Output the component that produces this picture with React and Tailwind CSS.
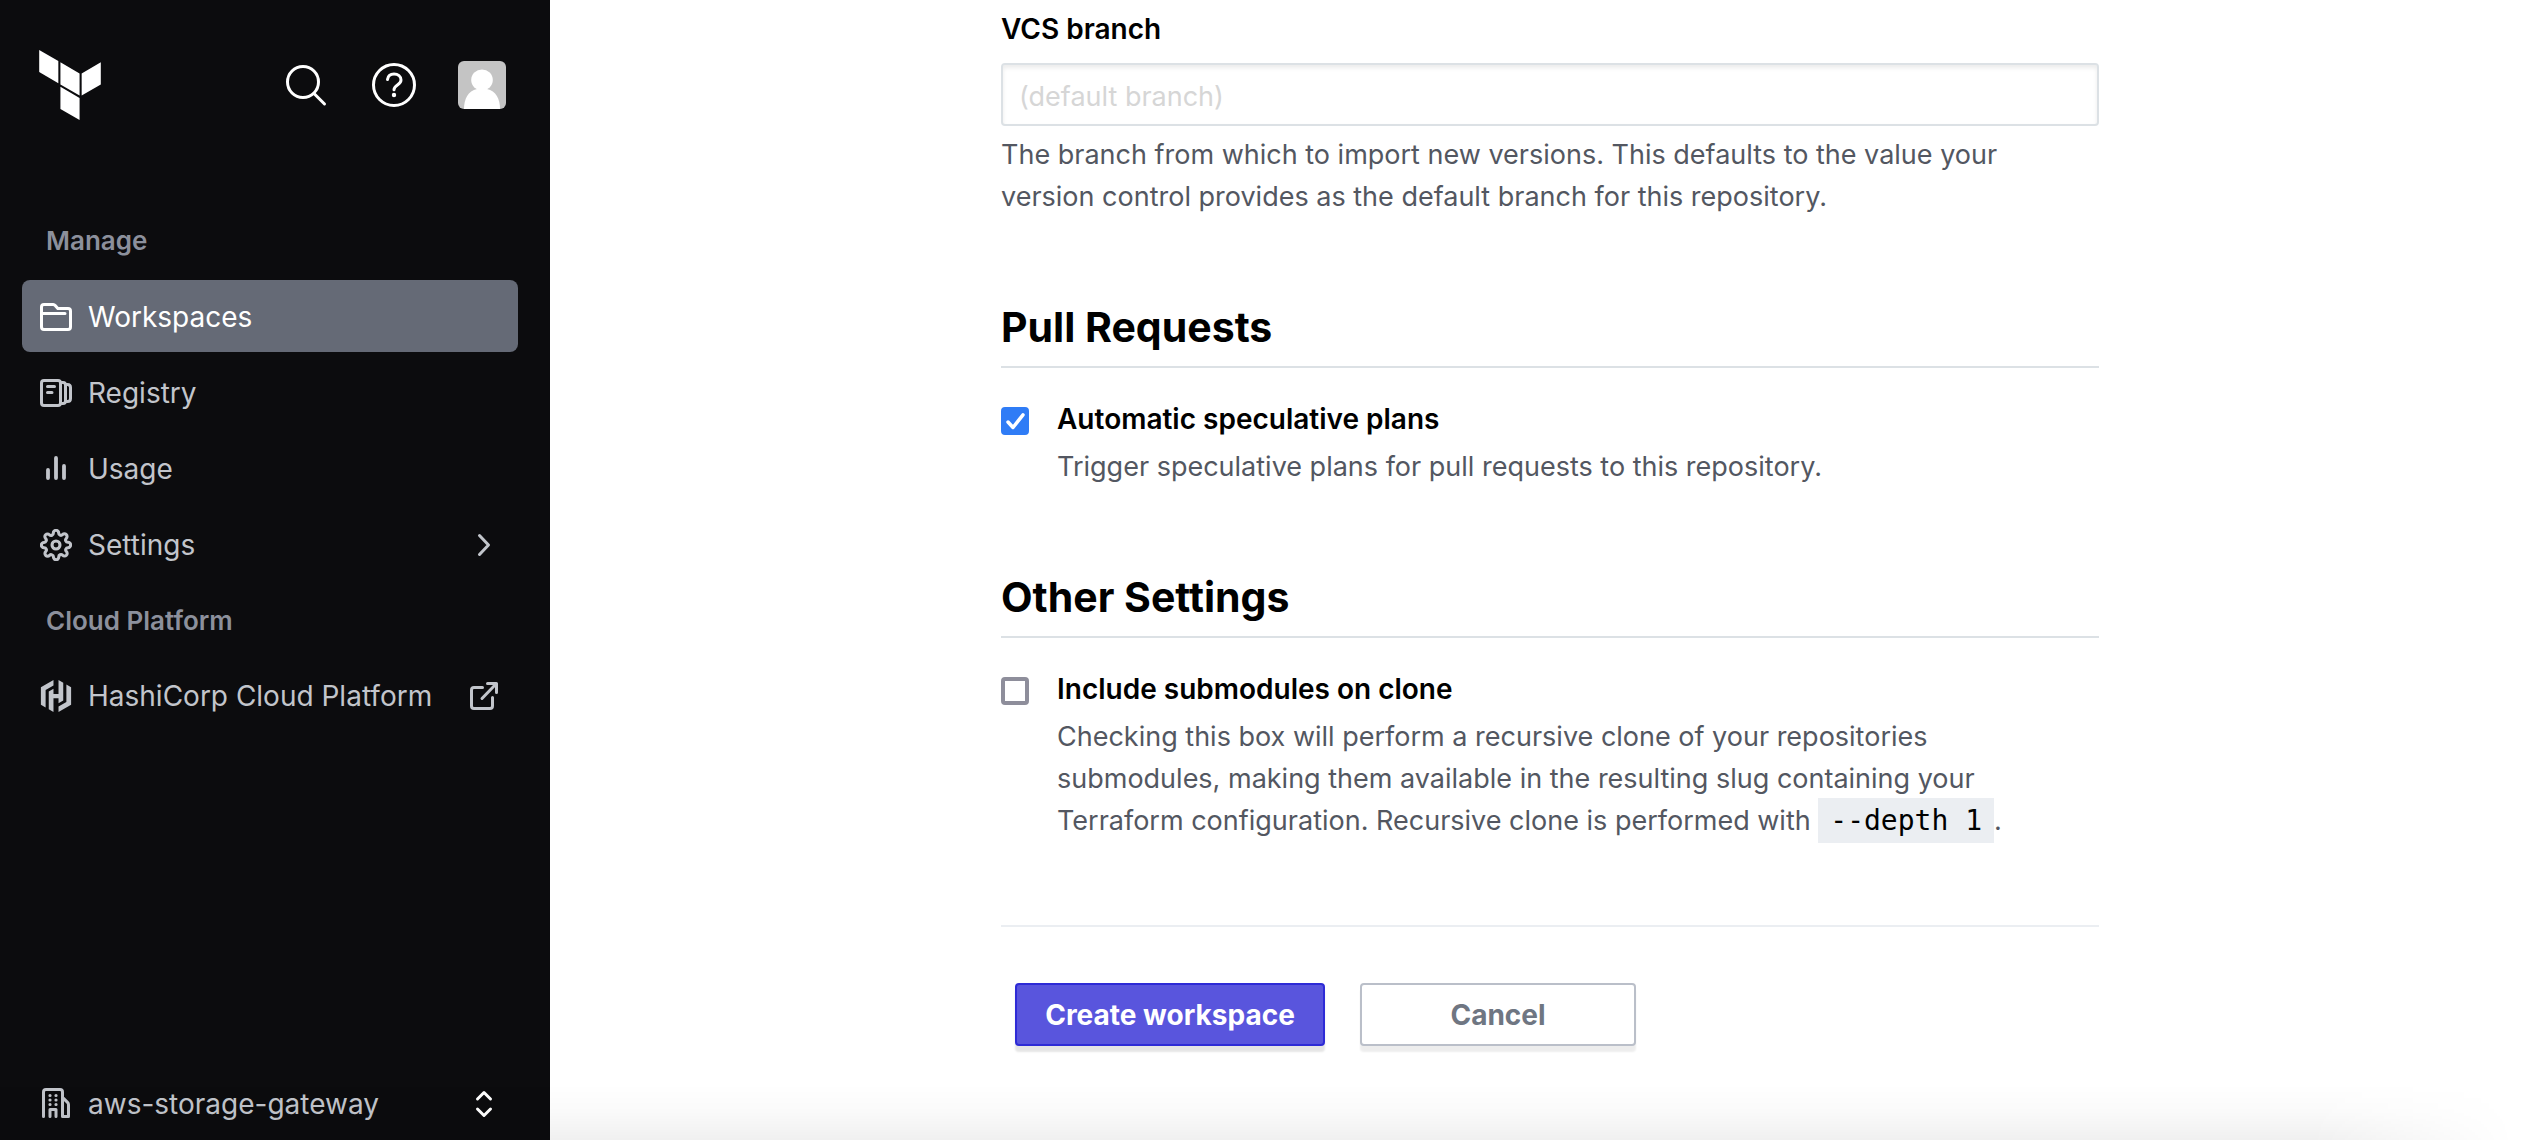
import { useState } from 'react';
import { FiSettings } from 'react-icons/fi';
import { SiHashicorp, SiTerraform } from 'react-icons/si';

const Icon = ({ children, className = '' }) => (
    <svg viewBox="0 0 16 16" fill="none" stroke="currentColor" strokeWidth="1.5" strokeLinecap="round" strokeLinejoin="round" className={`size-8 shrink-0 ${className}`} aria-hidden="true">
        {children}
    </svg>
);

const FolderIcon = () => (
    <Icon>
        <path d="M.75 13V3c0-.7.55-1.25 1.25-1.25h4.6c.4 0 .75.2 1 .5L8.9 3.75H14c.7 0 1.25.55 1.25 1.25v8c0 .7-.55 1.25-1.25 1.25H2C1.3 14.25.75 13.7.75 13zM1 6.25h11.5" />
    </Icon>
);

const RegistryIcon = () => (
    <Icon>
        <rect x=".75" y="1.75" width="9.5" height="12.5" rx="1.25" />
        <path d="M3.75 4.75h3.5M3.75 7.75h2.25M10.75 2.75h.75c.8 0 1.25.5 1.25 1.25v8c0 .75-.45 1.25-1.25 1.25h-.75M13 3.75h.75c.9 0 1.5.5 1.5 1.5v5.5c0 1-.6 1.5-1.5 1.5H13" />
    </Icon>
);

const UsageIcon = () => (
    <Icon>
        <path strokeWidth="1.9" d="M4 8.5v4M8 2.5v10M12 6.5v6" />
    </Icon>
);

const ExternalIcon = () => (
    <Icon>
        <path d="M7.25 3.75H3c-.7 0-1.25.55-1.25 1.25v8c0 .7.55 1.25 1.25 1.25h8c.7 0 1.25-.55 1.25-1.25V8.75M9.75 1.75h4.5v4.5M14 2L7 9.25" />
    </Icon>
);

const OrgIcon = () => (
    <Icon>
        <path d="M1.75 14.25V2c0-.7.55-1.25 1.25-1.25h7c.7 0 1.25.55 1.25 1.25v12.25h3V8.4c0-.5-.2-.9-.5-1.2l-2-2M5 14.25v-3.5h3v3.5" />
        <path strokeWidth="1.6" d="M5 3.75h.01M8 3.75h.01M5 6h.01M8 6h.01M5 8.25h.01M8 8.25h.01" />
    </Icon>
);

const navItems = [
    { label: 'Workspaces', icon: <FolderIcon />, active: true },
    { label: 'Registry', icon: <RegistryIcon /> },
    { label: 'Usage', icon: <UsageIcon /> },
    { label: 'Settings', icon: <FiSettings className="size-8" strokeWidth="2.3" />, more: true },
];

function Sidebar() {
    return (
        <aside className="flex w-[550px] shrink-0 flex-col bg-[#0c0c0e] text-[28px] text-[#c2c5cb]">
            <header className="flex h-[170px] items-center pr-11 pl-[35px]">
                <a href="#home" aria-label="Terraform" className="mr-auto text-white">
                    <SiTerraform className="size-[70px]" />
                </a>
                <div className="flex items-center gap-10 text-white">
                    <button type="button" aria-label="Search">
                        <svg viewBox="0 0 48 48" fill="none" stroke="currentColor" strokeWidth="3" strokeLinecap="round" className="size-12" aria-hidden="true">
                            <circle cx="21" cy="21" r="15.5" />
                            <path d="M32 32.5L42.5 43" />
                        </svg>
                    </button>
                    <button type="button" aria-label="Help">
                        <svg viewBox="0 0 48 48" fill="none" stroke="currentColor" strokeWidth="3" strokeLinecap="round" strokeLinejoin="round" className="size-12" aria-hidden="true">
                            <circle cx="24" cy="24" r="20.5" />
                            <path d="M17.5 18.5C18 15 20.5 13 24 13c4 0 7 2.4 7 6 0 5-7 5-7 9.8" />
                            <circle cx="24" cy="34" r="1.2" fill="currentColor" strokeWidth="2" />
                        </svg>
                    </button>
                    <button type="button" aria-label="Account" className="overflow-hidden rounded-md">
                        <svg viewBox="0 0 48 48" className="size-12 bg-[#c4c4c4]" fill="#fff" aria-hidden="true">
                            <ellipse cx="24" cy="19" rx="10.8" ry="10.5" />
                            <path d="M6 48C6 38 10 30 19 28h10c9 2 13 10 13 20z" />
                        </svg>
                    </button>
                </div>
            </header>

            <nav className="flex flex-col gap-1 pr-8 pl-[22px]">
                <h2 className="mt-[34px] flex h-[72px] items-center pl-6 text-[26px] font-semibold text-[#8c909c]">Manage</h2>
                {navItems.map(item => (
                    <a
                        key={item.label}
                        href={`#${item.label.toLowerCase()}`}
                        className={`flex h-[72px] items-center gap-4 rounded-lg px-[18px] pt-0.5 ${item.active ? 'bg-[#656a76] text-white' : ''}`}
                    >
                        {item.icon}
                        <span>{item.label}</span>
                        {item.more && (
                            <Icon className="ml-auto">
                                <path d="M5.75 3.25L10.25 8l-4.5 4.75" />
                            </Icon>
                        )}
                    </a>
                ))}
                <h2 className="flex h-[72px] items-center pl-6 text-[26px] font-semibold text-[#8c909c]">Cloud Platform</h2>
                <a href="#hcp" className="flex h-[72px] items-center gap-4 px-[18px]">
                    <SiHashicorp className="size-8 shrink-0" />
                    <span className="mr-auto whitespace-nowrap">HashiCorp Cloud Platform</span>
                    <ExternalIcon />
                </a>
            </nav>

            <button type="button" className="mt-auto flex h-[72px] items-center gap-4 pr-[50px] pl-10 text-left">
                <OrgIcon />
                <span>aws-storage-gateway</span>
                <Icon className="ml-auto text-white">
                    <path d="M4.75 5.5L8 2.25l3.25 3.25M4.75 10.5L8 13.75l3.25-3.25" />
                </Icon>
            </button>
        </aside>
    );
}

function CheckboxField({ id, label, defaultChecked = false, children }) {
    const [checked, setChecked] = useState(defaultChecked);

    return (
        <div className="flex gap-7 pt-[27px]">
            <div className="mt-3 grid size-7 shrink-0">
                <input
                    id={id}
                    type="checkbox"
                    checked={checked}
                    onChange={e => setChecked(e.target.checked)}
                    className="size-7 appearance-none rounded-[4px] border-4 border-[#8e8e9b] bg-white [grid-area:1/1] checked:border-[#2f7cf6] checked:bg-[#2f7cf6]"
                />
                {checked && (
                    <svg viewBox="0 0 28 28" fill="none" stroke="#fff" strokeWidth="3.5" strokeLinecap="round" strokeLinejoin="round" className="pointer-events-none size-7 [grid-area:1/1]" aria-hidden="true">
                        <path d="M7 15l5 5.5L22 7.8" />
                    </svg>
                )}
            </div>
            <div className="max-w-[970px]">
                <label htmlFor={id} className="block pb-[3px] text-[28px] leading-12 font-semibold text-black">{label}</label>
                <p>{children}</p>
            </div>
        </div>
    );
}

function SectionTitle({ children }) {
    return <h2 className="border-b-2 border-[#dce1e5] pb-3 text-[41px] leading-[54px] font-bold text-black">{children}</h2>;
}

export default function App() {
    return (
        <div className="relative flex min-h-screen bg-white font-['Inter','Liberation_Sans',sans-serif]">
            <Sidebar />
            <main className="flex-1 pl-[10px]">
                <form className="mx-auto max-w-[1098px] pt-2 text-[27px] leading-[42px] text-[#535761]" onSubmit={e => e.preventDefault()}>
                    <label htmlFor="branch" className="block text-[28px] font-semibold text-black">VCS branch</label>
                    <input
                        id="branch"
                        type="text"
                        placeholder="(default branch)"
                        className="mt-[13px] block h-[63px] w-full rounded-[4px] border-2 border-[#dce1e5] px-4 pt-[3px] shadow-[inset_0_3px_4px_rgba(0,0,0,0.08)] placeholder:text-[#d6d6d6]"
                    />
                    <p className="mt-2 max-w-[1040px]">The branch from which to import new versions. This defaults to the value your version control provides as the default branch for this repository.</p>

                    <section className="mt-[82px]">
                        <SectionTitle>Pull Requests</SectionTitle>
                        <CheckboxField id="speculative" label="Automatic speculative plans" defaultChecked>
                            Trigger speculative plans for pull requests to this repository.
                        </CheckboxField>
                    </section>

                    <section className="mt-[82px]">
                        <SectionTitle>Other Settings</SectionTitle>
                        <CheckboxField id="submodules" label="Include submodules on clone">
                            Checking this box will perform a recursive clone of your repositories submodules, making them available in the resulting slug containing your Terraform configuration. Recursive clone is performed with{' '}
                            <code className="bg-[#ebeef2] px-3 py-[6px] font-['DejaVu_Sans_Mono',monospace] text-[28px] text-black">--depth 1</code>.
                        </CheckboxField>
                    </section>

                    <div className="mt-[83px] flex gap-[35px] border-t-2 border-[#ebeef2] px-[14px] pt-14 pb-[94px] text-[28px] font-bold">
                        <button type="submit" className="h-[63px] w-[310px] rounded-[4px] border-2 border-[#2e2bd6] bg-[#5955dd] text-white shadow-[0_6px_2px_rgba(0,0,0,0.1)]">Create workspace</button>
                        <button type="button" className="h-[63px] w-[276px] rounded-[4px] border-2 border-[#babfc9] bg-white text-[#6f7682] shadow-[0_6px_2px_rgba(0,0,0,0.07)]">Cancel</button>
                    </div>
                </form>
            </main>
            <div className="pointer-events-none absolute inset-x-0 bottom-0 h-14 bg-linear-to-b from-transparent via-black/2 to-black/6 [mask-image:linear-gradient(to_right,black_91%,transparent_99%)]" />
        </div>
    );
}
